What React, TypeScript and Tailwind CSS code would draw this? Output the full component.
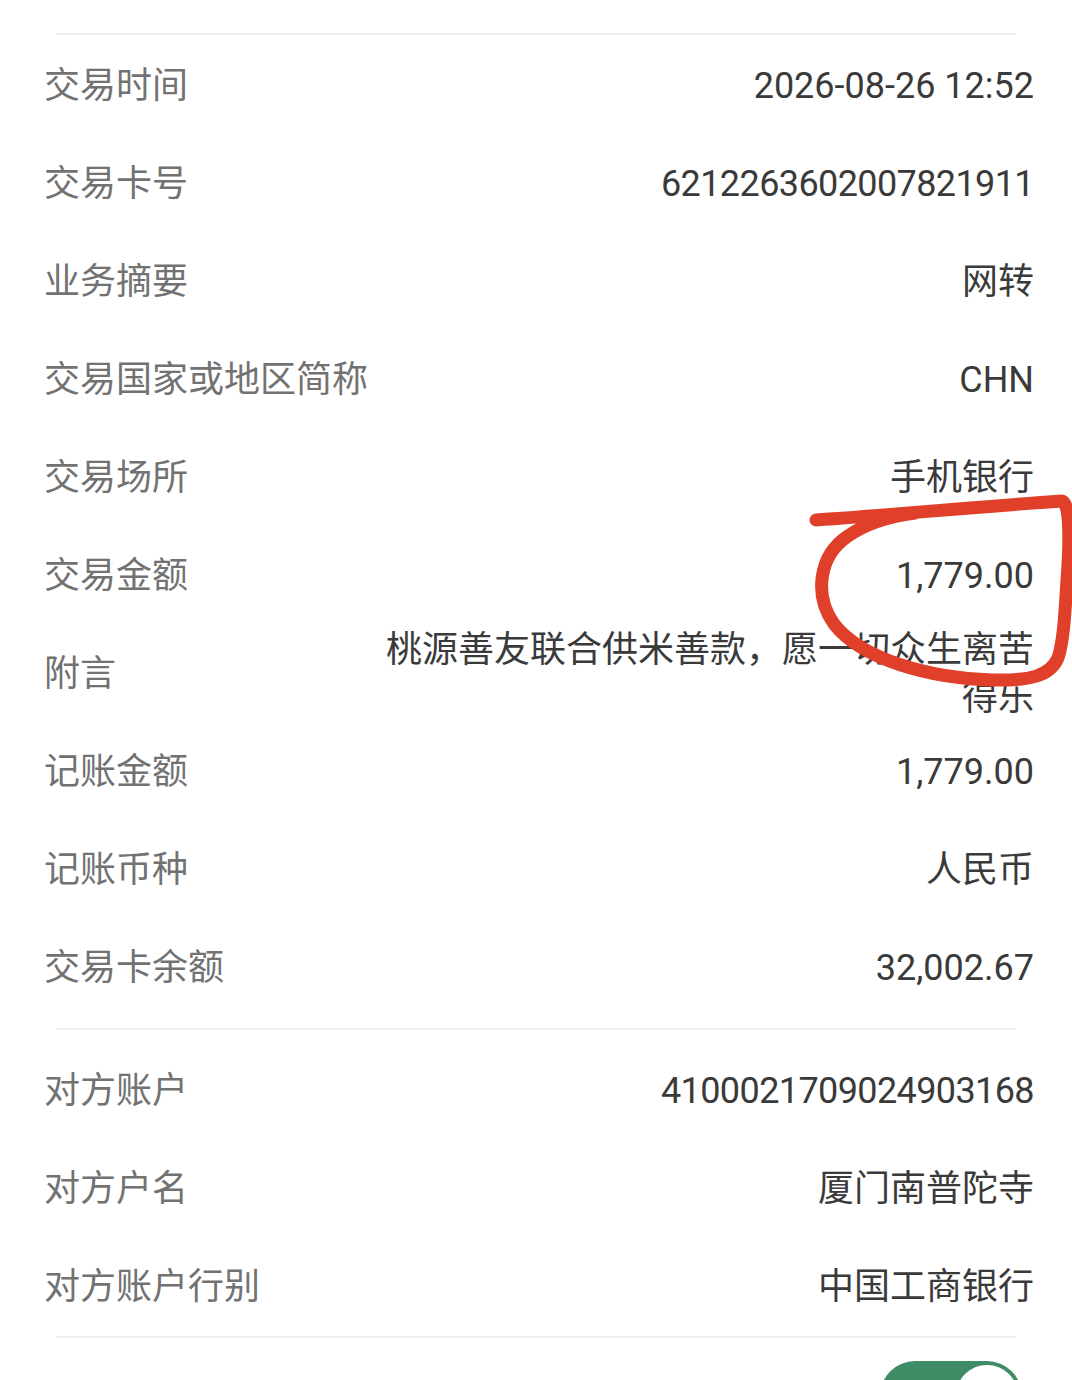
import React from 'react'

interface Row {
  label: string
  value: string
  tight?: boolean
}

const mainRows: Row[] = [
  { label: '交易时间', value: '2026-08-26 12:52' },
  { label: '交易卡号', value: '6212263602007821911', tight: true },
  { label: '业务摘要', value: '网转' },
  { label: '交易国家或地区简称', value: 'CHN' },
  { label: '交易场所', value: '手机银行' },
  { label: '交易金额', value: '1,779.00' },
  { label: '附言', value: '桃源善友联合供米善款，愿一切众生离苦得乐' },
  { label: '记账金额', value: '1,779.00' },
  { label: '记账币种', value: '人民币' },
  { label: '交易卡余额', value: '32,002.67' },
]

const payeeRows: Row[] = [
  { label: '对方账户', value: '4100021709024903168', tight: true },
  { label: '对方户名', value: '厦门南普陀寺' },
  { label: '对方账户行别', value: '中国工商银行' },
]

function DetailRow({ label, value, tight }: Row) {
  return (
    <div className="flex h-[98px] items-center justify-between pl-[44px] pr-[38px]">
      <span className="shrink-0 text-[36px] leading-[48px] text-[#727272]">{label}</span>
      <span
        className={`max-w-[652px] text-right text-[36px] leading-[48px] text-[#3a3a3a] ${
          tight ? 'tracking-[-0.6px]' : 'tracking-normal'
        }`}
      >
        {value}
      </span>
    </div>
  )
}

function Divider() {
  return <div className="mx-[56px] h-[2px] bg-[#efefef]" />
}

export default function App() {
  return (
    <div
      className="relative h-[1380px] w-[1072px] overflow-hidden bg-white"
      style={{ fontFamily: 'Roboto, "Noto Sans CJK SC", sans-serif' }}
    >
      <div className="pt-[33px]">
        <Divider />
        <div className="pt-[2px]">
          {mainRows.map((r) => (
            <DetailRow key={r.label} {...r} />
          ))}
        </div>
        <div className="mt-[11px]">
          <Divider />
        </div>
        <div className="pt-[12px]">
          {payeeRows.map((r) => (
            <DetailRow key={r.label} {...r} />
          ))}
        </div>
        <Divider />

        {/* toggle, cut off at the bottom */}
        <div className="flex justify-end pr-[50px] pt-[23px]">
          <div className="flex h-[70px] w-[142px] items-center justify-end rounded-full bg-[#3f8d66] pr-[4px]">
            <div className="h-[62px] w-[62px] rounded-full bg-white" />
          </div>
        </div>
      </div>

      {/* hand-drawn red circle over the amount */}
      <svg
        className="pointer-events-none absolute left-0 top-0"
        width="1072"
        height="1380"
        viewBox="0 0 1072 1380"
        fill="none"
      >
        <path
          d="M816 520 C880 516 960 508 1062 501 C1070 503 1070 540 1067 580 C1065 610 1064 640 1058 658 C1050 676 1030 681 992 680 C930 678 862 660 834 624 C814 596 818 556 848 536 C868 522 892 516 915 513"
          stroke="#e0402a"
          strokeWidth="13"
          strokeLinecap="round"
          strokeLinejoin="round"
        />
      </svg>
    </div>
  )
}
